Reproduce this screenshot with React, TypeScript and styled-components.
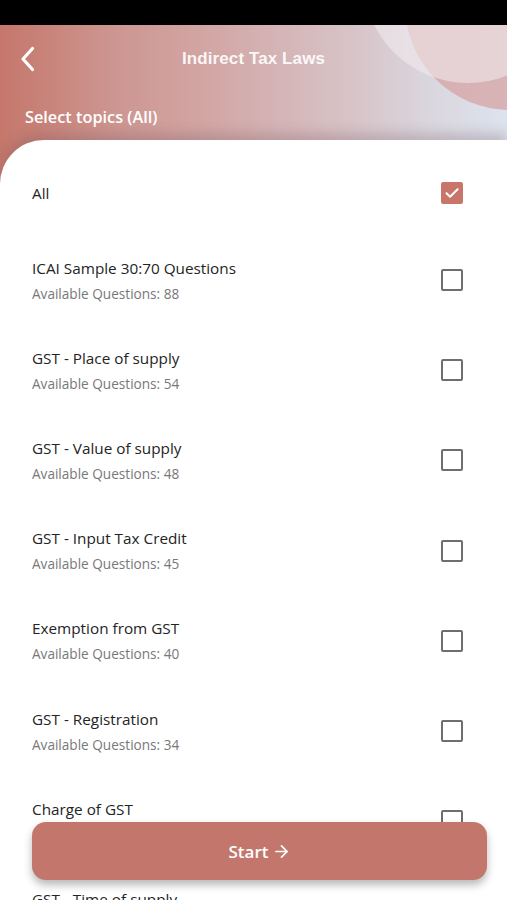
import React, { useState } from 'react'
import styled, { createGlobalStyle } from 'styled-components'
import { ArrowRight } from 'lucide-react'

type Topic = { id: string; title: string; count: number }

const topics: Topic[] = [
  { id: 'icai', title: 'ICAI Sample 30:70 Questions', count: 88 },
  { id: 'place', title: 'GST - Place of supply', count: 54 },
  { id: 'value', title: 'GST - Value of supply', count: 48 },
  { id: 'itc', title: 'GST - Input Tax Credit', count: 45 },
  { id: 'exempt', title: 'Exemption from GST', count: 40 },
  { id: 'reg', title: 'GST - Registration', count: 34 },
  { id: 'charge', title: 'Charge of GST', count: 31 },
  { id: 'time', title: 'GST - Time of supply', count: 28 },
]

const GlobalStyle = createGlobalStyle`
  html, body {
    margin: 0;
    padding: 0;
    background: #fff;
  }
  body {
    font-family: 'Open Sans', 'Noto Sans', sans-serif;
  }
  * { box-sizing: border-box; }
`

const Screen = styled.div`
  position: relative;
  width: 507px;
  height: 900px;
  overflow: hidden;
  display: flex;
  flex-direction: column;
  background: linear-gradient(
    90deg,
    #c5776b 0%,
    #cd9590 22%,
    #d3aaa9 45%,
    #d7c2c6 68%,
    #dad6de 85%,
    #dde3ee 100%
  );
`

const StatusBar = styled.div`
  height: 25px;
  background: #000;
  flex-shrink: 0;
  position: relative;
  z-index: 2;
`

// decorative circles in the top right corner
const Bubble = styled.div<{ $x: number; $y: number; $r: number; $bg: string }>`
  position: absolute;
  left: ${p => p.$x - p.$r}px;
  top: ${p => p.$y - p.$r}px;
  width: ${p => p.$r * 2}px;
  height: ${p => p.$r * 2}px;
  border-radius: 50%;
  background: ${p => p.$bg};
  z-index: 0;
`

const NavBar = styled.div`
  position: relative;
  z-index: 1;
  height: 68px;
  display: flex;
  align-items: center;
  justify-content: center;
  flex-shrink: 0;
`

const BackButton = styled.button`
  position: absolute;
  left: 16px;
  top: 50%;
  transform: translateY(-50%);
  background: none;
  border: none;
  padding: 4px;
  display: flex;
  cursor: pointer;
`

const Title = styled.h1`
  margin: 0;
  font-family: 'Liberation Sans', Arial, sans-serif;
  font-weight: 700;
  font-size: 17px;
  color: rgba(255, 255, 255, 0.92);
  letter-spacing: 0.1px;
`

const SectionLabel = styled.div`
  position: relative;
  z-index: 1;
  padding: 12px 25px 0;
  height: 47px;
  font-size: 16.3px;
  font-weight: 600;
  line-height: 24px;
  color: #fff;
  flex-shrink: 0;
`

const Card = styled.div`
  position: relative;
  z-index: 1;
  flex: 1;
  background: #fff;
  border-top-left-radius: 44px;
  padding-top: 10px;
  box-shadow: 0 -7px 12px rgba(110, 80, 90, 0.25);
`

const Row = styled.label<{ $single?: boolean }>`
  display: flex;
  align-items: center;
  justify-content: space-between;
  height: ${p => (p.$single ? 85 : 90.2)}px;
  padding: 0 44px 0 32px;
  cursor: pointer;
`

const RowText = styled.div`
  display: flex;
  flex-direction: column;
`

const RowTitle = styled.span`
  font-size: 15.3px;
  font-weight: 500;
  line-height: 20px;
  color: #242424;
`

const RowSub = styled.span`
  margin-top: 7px;
  font-size: 13.6px;
  line-height: 18px;
  color: #787878;
`

const Box = styled.span<{ $checked: boolean }>`
  width: 22px;
  height: 22px;
  border-radius: 2px;
  flex-shrink: 0;
  display: flex;
  align-items: center;
  justify-content: center;
  background: ${p => (p.$checked ? '#c8766b' : 'transparent')};
  border: ${p => (p.$checked ? 'none' : '2px solid #6e6e6e')};
`

const StartButton = styled.button`
  position: absolute;
  z-index: 3;
  left: 32px;
  right: 20px;
  bottom: 20px;
  height: 58px;
  border: none;
  border-radius: 14px;
  background: #c3776c;
  color: #fff;
  font-family: 'Open Sans', sans-serif;
  font-size: 17px;
  font-weight: 600;
  display: flex;
  align-items: center;
  justify-content: center;
  gap: 3px;
  box-shadow: 0 5px 9px rgba(0, 0, 0, 0.28);
  cursor: pointer;
`

const Check: React.FC<{ checked: boolean }> = ({ checked }) => (
  <Box $checked={checked}>
    {checked && (
      <svg width="16" height="16" viewBox="0 0 16 16" fill="none">
        <path d="M2.5 8.2l3.6 3.6L13.6 4.3" stroke="#fff" strokeWidth="2" strokeLinecap="round" strokeLinejoin="round" />
      </svg>
    )}
  </Box>
)

const App: React.FC = () => {
  const [all, setAll] = useState(true)
  const [picked, setPicked] = useState<string[]>([])

  const toggle = (id: string) => {
    setAll(false)
    setPicked(prev => (prev.includes(id) ? prev.filter(x => x !== id) : [...prev, id]))
  }

  return (
    <>
      <GlobalStyle />
      <Screen>
        <Bubble $x={510} $y={5} $r={105} $bg="rgba(214, 160, 158, 0.7)" />
        <Bubble $x={468} $y={-22} $r={105} $bg="rgba(242, 236, 240, 0.55)" />
        <StatusBar />
        <NavBar>
          <BackButton aria-label="Back">
            <svg width="16" height="26" viewBox="0 0 16 26" fill="none">
              <path d="M12.5 2.5L3 13l9.5 10.5" stroke="#fff" strokeWidth="3.2" strokeLinecap="round" strokeLinejoin="round" />
            </svg>
          </BackButton>
          <Title>Indirect Tax Laws</Title>
        </NavBar>
        <SectionLabel>Select topics (All)</SectionLabel>
        <Card>
          <Row $single onClick={() => { setAll(!all); setPicked([]) }}>
            <RowTitle>All</RowTitle>
            <Check checked={all} />
          </Row>
          {topics.map(t => (
            <Row key={t.id} onClick={() => toggle(t.id)}>
              <RowText>
                <RowTitle>{t.title}</RowTitle>
                <RowSub>Available Questions: {t.count}</RowSub>
              </RowText>
              <Check checked={picked.includes(t.id)} />
            </Row>
          ))}
        </Card>
        <StartButton>
          Start <ArrowRight size={19} strokeWidth={2.2} />
        </StartButton>
      </Screen>
    </>
  )
}

export default App
